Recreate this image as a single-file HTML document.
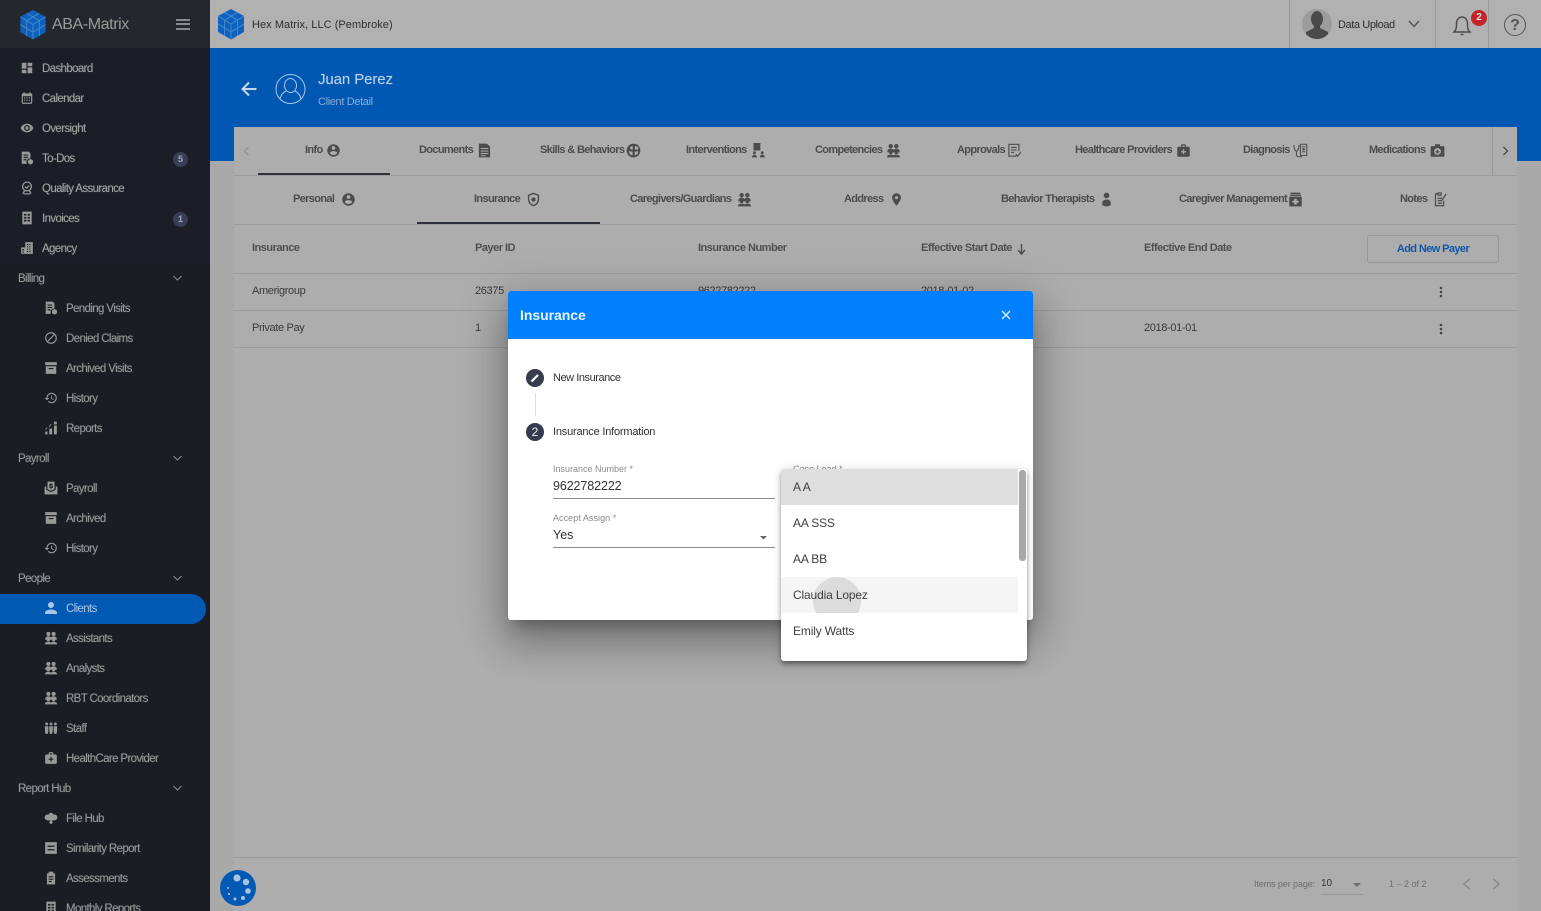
<!DOCTYPE html>
<html lang="en"><head><meta charset="utf-8"><title>Insurance</title>
<style>
html,body{margin:0;padding:0;width:1541px;height:911px;overflow:hidden}
body{position:relative;background:#a9a9a9;font-family:"Liberation Sans",sans-serif}
.a{position:absolute}
.t{position:absolute;white-space:nowrap;line-height:16px;height:16px}
.s{color:#a3a3a3;font-size:11.500px;letter-spacing:-.63px;margin-top:1px;text-shadow:0 0 1px rgba(163,163,163,.45)}
.g{color:#989898;font-size:11.500px;letter-spacing:-.63px;margin-top:1px;text-shadow:0 0 1px rgba(152,152,152,.45)}
.b{color:#4c4c4c;font-size:11px;font-weight:bold;letter-spacing:-.65px}
.h{color:#4f4f4f;font-size:11px;font-weight:bold;letter-spacing:-.5px}
.r{color:#3a3a3a;font-size:11px;letter-spacing:-.35px}
.ln{position:absolute;left:234px;width:1283px;height:1px;background:#9c9c9c}
svg{position:absolute;overflow:visible}
.si{fill:#989898;width:14px;height:14px}
.ti{fill:#4c4c4c;width:15px;height:15px}
.o{position:absolute;left:12px;font-size:12px;letter-spacing:-.15px;color:#3e3e3e;line-height:16px;white-space:nowrap}
</style></head><body>
<svg width="0" height="0" style="position:absolute"><defs>
<symbol id="cube" viewBox="0 0 30 32"><path d="M15 1 28 8v16l-13 7.500L2 24V8z" fill="#0e62bd"/><path d="M15 16v15M15 16 2 8M15 16 28 8M8.500 4.500 21.500 12M21.500 4.500 8.500 12M2 16l6.500 4v8M28 16l-6.500 4v8M8.500 12v8M21.500 12v8M2 16l13 8 13-8" stroke="#5d97d2" stroke-width=".9" fill="none" opacity=".75"/></symbol>
<symbol id="dash" viewBox="0 0 24 24"><path d="M3 13h8V3H3zm0 8h8v-6H3zm10 0h8V11h-8zm0-18v6h8V3z"/></symbol>
<symbol id="cal" viewBox="0 0 24 24"><path d="M9 11H7v2h2zm4 0h-2v2h2zm4 0h-2v2h2zm-8 4H7v2h2zm4 0h-2v2h2zm4 0h-2v2h2zm2-11h-1V2h-2v2H8V2H6v2H5c-1.110 0-2 .9-2 2v14a2 2 0 0 0 2 2h14c1.100 0 2-.9 2-2V6c0-1.100-.9-2-2-2zm0 16H5V9h14z"/></symbol>
<symbol id="eye" viewBox="0 0 24 24"><path d="M12 4.500C7 4.500 2.730 7.610 1 12c1.730 4.390 6 7.500 11 7.500s9.270-3.110 11-7.500c-1.730-4.390-6-7.500-11-7.500zM12 17c-2.760 0-5-2.240-5-5s2.240-5 5-5 5 2.240 5 5-2.240 5-5 5zm0-8c-1.660 0-3 1.340-3 3s1.340 3 3 3 3-1.340 3-3-1.340-3-3-3z"/></symbol>
<symbol id="todo" viewBox="0 0 24 24"><path fill-rule="evenodd" d="M3 1h12l3 3v9a6 6 0 0 0-6 9H3zM6 6v2h8V6zm0 4v2h8v-2zm0 4v2h5v-2z"/><circle cx="18" cy="18.500" r="4.500"/></symbol>
<symbol id="qa" viewBox="0 0 24 24"><path fill="none" stroke="#989898" stroke-width="2.200" d="M12 2a7.500 7.500 0 1 0 .01 0zM8.500 9.500l3 3 4.500-5M8 16l-3 6M16 16l3 6M7 22h10"/></symbol>
<symbol id="inv" viewBox="0 0 24 24"><path fill-rule="evenodd" d="M4 1h16v22H4zM7 5v3h4V5zm6 0v3h4V5zm-6 5v3h4v-3zm6 0v3h4v-3zm-6 5v3h4v-3zm6 0v3h4v-3z"/></symbol>
<symbol id="agency" viewBox="0 0 24 24"><path fill-rule="evenodd" d="M9 2h13v20H2V11h7zM12 5v2h2V5zm4 0v2h2V5zm-4 4v2h2V9zm4 0v2h2V9zm-4 4v2h2v-2zm4 0v2h2v-2zm0 4v2h2v-2zm-4 0v2h2v-2zM4 14v2h3v-2zm0 4v2h3v-2z"/></symbol>
<symbol id="block" viewBox="0 0 24 24"><path d="M12 2C6.480 2 2 6.480 2 12s4.480 10 10 10 10-4.480 10-10S17.520 2 12 2zM4 12c0-4.420 3.580-8 8-8 1.850 0 3.550.63 4.900 1.690L5.690 16.900C4.630 15.550 4 13.850 4 12zm8 8c-1.850 0-3.550-.63-4.900-1.690L18.310 7.100C19.370 8.450 20 10.150 20 12c0 4.420-3.580 8-8 8z"/></symbol>
<symbol id="arch" viewBox="0 0 24 24"><path fill-rule="evenodd" d="M2 2h20v5H2zM3 9h18v13H3zm5 3v2h8v-2z"/></symbol>
<symbol id="hist" viewBox="0 0 24 24"><path d="M13 3a9 9 0 0 0-9 9H1l3.890 3.890.07.14L9 12H6c0-3.870 3.130-7 7-7s7 3.130 7 7-3.130 7-7 7c-1.930 0-3.680-.79-4.940-2.060l-1.420 1.420A8.954 8.954 0 0 0 13 21a9 9 0 0 0 0-18zm-1 5v5l4.280 2.540.72-1.210-3.500-2.080V8z"/></symbol>
<symbol id="rep" viewBox="0 0 24 24"><path d="M2 18h4v5H2zM9 13h5v10H9zM17 8h5v15h-5zM2 14l3-3 1 1-3 3zM8 9l4-4 1 1-4 4zM17 1h5v5h-5z"/></symbol>
<symbol id="pay" viewBox="0 0 24 24"><path fill-rule="evenodd" d="M6 1h12v13l-6 3-6-3zM11 4v1.500H9v4h4v1H9V12h2v1h2v-1h2V8h-4V7h4V5.500h-2V4zM1 10l3-1v6l8 4 8-4V9l3 1v13H1z"/></symbol>
<symbol id="person" viewBox="4 4 16 16"><path d="M12 12c2.210 0 4-1.790 4-4s-1.790-4-4-4-4 1.790-4 4 1.790 4 4 4zm0 2c-2.670 0-8 1.340-8 4v2h16v-2c0-2.660-5.330-4-8-4z"/></symbol>
<symbol id="group" viewBox="0 0 24 24"><circle cx="7.500" cy="5" r="3.500"/><circle cx="16.500" cy="5" r="3.500"/><path d="M2 14c0-3 2.500-5 5.500-5 1.800 0 3.400.7 4.500 2 1.100-1.300 2.700-2 4.500-2 3 0 5.500 2 5.500 5v1H2z"/><circle cx="7.500" cy="15" r="2.800" /><circle cx="16.500" cy="15" r="2.800"/><path d="M1.500 23c0-3 2.500-4.500 6-4.500 2 0 3.500.5 4.500 1.500 1-1 2.500-1.500 4.500-1.500 3.500 0 6 1.500 6 4.500z"/></symbol>
<symbol id="staff" viewBox="0 0 24 24"><circle cx="4.500" cy="5" r="2.500"/><circle cx="12" cy="5" r="2.500"/><circle cx="19.500" cy="5" r="2.500"/><path d="M1.500 9h6v7l-1 6h-4l-1-6zM9 9h6v7l-1 6h-4l-1-6zM16.500 9h6v7l-1 6h-4l-1-6z"/></symbol>
<symbol id="bag" viewBox="0 0 24 24"><path d="M20 6h-4V4c0-1.100-.9-2-2-2h-4c-1.100 0-2 .9-2 2v2H4c-1.100 0-2 .9-2 2v12c0 1.100.9 2 2 2h16c1.100 0 2-.9 2-2V8c0-1.100-.9-2-2-2zM10 4h4v2h-4zm6 11h-3v3h-2v-3H8v-2h3v-3h2v3h3z"/></symbol>
<symbol id="hub" viewBox="0 0 24 24"><path d="M12 3a4.500 4.500 0 0 1 4.300 3.300A5 5 0 1 1 18 16h-4v3h2l-4 4-4-4h2v-3H6a5 5 0 1 1 1.700-9.700A4.500 4.500 0 0 1 12 3z"/></symbol>
<symbol id="sim" viewBox="0 0 24 24"><path fill-rule="evenodd" d="M2 2h20v20H2zM6 8v2h12V8zm0 6v2h12v-2z"/></symbol>
<symbol id="asm" viewBox="0 0 24 24"><path fill-rule="evenodd" d="M8 1h8v3h3v19H5V4h3zM8 9v2h8V9zm0 4v2h8v-2zm0 4v2h5v-2z"/></symbol>
<symbol id="acc" viewBox="0 0 24 24"><path d="M12 2C6.480 2 2 6.480 2 12s4.480 10 10 10 10-4.480 10-10S17.520 2 12 2zm0 3c1.660 0 3 1.340 3 3s-1.340 3-3 3-3-1.340-3-3 1.340-3 3-3zm0 14.200c-2.500 0-4.710-1.280-6-3.220.03-1.990 4-3.080 6-3.080 1.990 0 5.970 1.090 6 3.080-1.290 1.940-3.500 3.220-6 3.220z"/></symbol>
<symbol id="doc" viewBox="0 0 24 24"><path fill-rule="evenodd" d="M3 1h13l5 5v17H3zM6 8v1.500h12V8zm0 4v1.500h12V12zm0 4v1.500h12V16zm0 3.500V21h8v-1.500z"/></symbol>
<symbol id="skill" viewBox="0 0 24 24"><path fill-rule="evenodd" d="M12 1a11 11 0 1 0 .01 0zM10.500 4.500 6 7l2 3.500 3-.5zm4 0-.5 5.500 5 1 1-4zM4.500 13l1.500 5 4.500 2v-6zm9.500 1v6l5-3v-4z"/></symbol>
<symbol id="interv" viewBox="0 0 24 24"><path d="M4 0h11v12H4z"/><circle cx="5.500" cy="15.500" r="2.300"/><path d="M1.500 23c0-3 2-4.500 4-4.500s4 1.500 4 4.500z"/><circle cx="18" cy="15.500" r="2.300"/><path d="M14 23c0-3 2-4.500 4-4.500s4 1.500 4 4.500z"/></symbol>
<symbol id="appr" viewBox="0 0 24 24"><path fill="none" stroke="#4c4c4c" stroke-width="1.800" d="M15 21H3V2h16v11M6.500 7h9M6.500 11h9M6.500 15h5M14 18l3 3 5-6"/></symbol>
<symbol id="steth" viewBox="0 0 24 24"><path fill="none" stroke="#4c4c4c" stroke-width="1.700" d="M1.500 3c0 7 2 10 4 10s4-3 4-10M5.500 13v5c0 3 2 4 4 4h5M12 2h10v18H12zM14.500 6h5M14.500 14h5"/><circle cx="17" cy="10" r="2" fill="#4c4c4c"/></symbol>
<symbol id="cam" viewBox="0 0 24 24"><path fill-rule="evenodd" d="M8 2h8v3h5a2 2 0 0 1 2 2v13a2 2 0 0 1-2 2H3a2 2 0 0 1-2-2V7a2 2 0 0 1 2-2h5zM12 8a5.500 5.500 0 1 0 .01 0z"/><path d="M11 11h2v2h2v2h-2v2h-2v-2H9v-2h2z"/></symbol>
<symbol id="shield" viewBox="0 0 24 24"><path fill-rule="evenodd" d="M12 1l9 3.500v7c0 5.500-3.800 9.700-9 11.500-5.200-1.800-9-6-9-11.500v-7zm0 2.500L5.300 6v5.500c0 4.200 2.900 7.500 6.700 9 3.800-1.500 6.700-4.800 6.700-9V6z"/><circle cx="12" cy="12" r="3.500"/></symbol>
<symbol id="pin" viewBox="0 0 24 24"><path d="M12 2C8.130 2 5 5.130 5 9c0 5.250 7 13 7 13s7-7.750 7-13c0-3.870-3.130-7-7-7zm0 9.500a2.500 2.500 0 0 1 0-5 2.500 2.500 0 0 1 0 5z"/></symbol>
<symbol id="ther" viewBox="0 0 24 24"><circle cx="12" cy="5.500" r="4.500"/><path d="M5 18c0-4 3-6 7-6s7 2 7 6z"/><ellipse cx="12" cy="19.500" rx="7" ry="3.500"/></symbol>
<symbol id="cg" viewBox="0 0 24 24"><path fill-rule="evenodd" d="M4 1h16v3H4zM3 5h18v2H3zM2 8h20v15H2zm8 3v3H7v3h3v3h4v-3h3v-3h-3v-3z"/></symbol>
<symbol id="note" viewBox="0 0 24 24"><path fill="none" stroke="#4c4c4c" stroke-width="1.900" d="M8 3H4v19h13v-8M8 1.500h5V5H8zM7.500 10h7M7.500 14h6M7.500 18h7M13 15 21 3"/></symbol>
</defs></svg>

<!-- SIDEBAR -->
<div class="a" style="left:0;top:0;width:210px;height:911px;background:#1b1e26"></div>
<div class="a" style="left:0;top:0;width:210px;height:48px;background:#24272e"></div>
<div class="a" style="left:0;top:264px;width:210px;height:647px;background:#1a1d24"></div>
<svg style="left:18px;top:9px" width="30" height="31"><use href="#cube"/></svg>
<div class="t" style="left:52px;top:17px;color:#9a9a9a;font-size:16px;letter-spacing:-.4px">ABA-Matrix</div>
<div class="a" style="left:176px;top:19px;width:14px;height:2px;background:#8a8a8a;box-shadow:0 4px 0 #8a8a8a,0 9px 0 #8a8a8a"></div>

<svg class="si" style="left:20px;top:61px"><use href="#dash"/></svg><div class="t s" style="left:42px;top:60px">Dashboard</div>
<svg class="si" style="left:20px;top:91px"><use href="#cal"/></svg><div class="t s" style="left:42px;top:90px">Calendar</div>
<svg class="si" style="left:20px;top:121px"><use href="#eye"/></svg><div class="t s" style="left:42px;top:120px">Oversight</div>
<svg class="si" style="left:20px;top:151px"><use href="#todo"/></svg><div class="t s" style="left:42px;top:150px">To-Dos</div>
<svg class="si" style="left:20px;top:181px"><use href="#qa"/></svg><div class="t s" style="left:42px;top:180px">Quality Assurance</div>
<svg class="si" style="left:20px;top:211px"><use href="#inv"/></svg><div class="t s" style="left:42px;top:210px">Invoices</div>
<svg class="si" style="left:20px;top:241px"><use href="#agency"/></svg><div class="t s" style="left:42px;top:240px">Agency</div>
<div class="a" style="left:173px;top:152px;width:15px;height:15px;border-radius:50%;background:#383d58;color:#a5a5b5;font-size:9px;font-weight:bold;line-height:14px;text-align:center">5</div>
<div class="a" style="left:173px;top:212px;width:15px;height:15px;border-radius:50%;background:#383d58;color:#a5a5b5;font-size:9px;font-weight:bold;line-height:14px;text-align:center">1</div>

<div class="t g" style="left:18px;top:270px">Billing</div>
<svg style="left:173px;top:275px" width="9" height="6"><path d="M.5 1 4.500 5 8.500 1" fill="none" stroke="#8a8a8a" stroke-width="1.100"/></svg>
<svg class="si" style="left:44px;top:301px"><use href="#todo"/></svg><div class="t g" style="left:66px;top:300px">Pending Visits</div>
<svg class="si" style="left:44px;top:331px"><use href="#block"/></svg><div class="t g" style="left:66px;top:330px">Denied Claims</div>
<svg class="si" style="left:44px;top:361px"><use href="#arch"/></svg><div class="t g" style="left:66px;top:360px">Archived Visits</div>
<svg class="si" style="left:44px;top:391px"><use href="#hist"/></svg><div class="t g" style="left:66px;top:390px">History</div>
<svg class="si" style="left:44px;top:421px"><use href="#rep"/></svg><div class="t g" style="left:66px;top:420px">Reports</div>

<div class="t g" style="left:18px;top:450px">Payroll</div>
<svg style="left:173px;top:455px" width="9" height="6"><path d="M.5 1 4.500 5 8.500 1" fill="none" stroke="#8a8a8a" stroke-width="1.100"/></svg>
<svg class="si" style="left:44px;top:481px"><use href="#pay"/></svg><div class="t g" style="left:66px;top:480px">Payroll</div>
<svg class="si" style="left:44px;top:511px"><use href="#arch"/></svg><div class="t g" style="left:66px;top:510px">Archived</div>
<svg class="si" style="left:44px;top:541px"><use href="#hist"/></svg><div class="t g" style="left:66px;top:540px">History</div>

<div class="t g" style="left:18px;top:570px">People</div>
<svg style="left:173px;top:575px" width="9" height="6"><path d="M.5 1 4.500 5 8.500 1" fill="none" stroke="#8a8a8a" stroke-width="1.100"/></svg>
<div class="a" style="left:0;top:594px;width:206px;height:30px;background:#0059b3;border-radius:0 15px 15px 0"></div>
<svg style="left:45px;top:602px;width:12px;height:12px;fill:#a8c6e6"><use href="#person"/></svg><div class="t" style="left:66px;top:601px;color:#a8c6e6;font-size:11.500px;letter-spacing:-.63px">Clients</div>
<svg class="si" style="left:44px;top:631px"><use href="#group"/></svg><div class="t g" style="left:66px;top:630px">Assistants</div>
<svg class="si" style="left:44px;top:661px"><use href="#group"/></svg><div class="t g" style="left:66px;top:660px">Analysts</div>
<svg class="si" style="left:44px;top:691px"><use href="#group"/></svg><div class="t g" style="left:66px;top:690px">RBT Coordinators</div>
<svg class="si" style="left:44px;top:721px"><use href="#staff"/></svg><div class="t g" style="left:66px;top:720px">Staff</div>
<svg class="si" style="left:44px;top:751px"><use href="#bag"/></svg><div class="t g" style="left:66px;top:750px">HealthCare Provider</div>

<div class="t g" style="left:18px;top:780px">Report Hub</div>
<svg style="left:173px;top:785px" width="9" height="6"><path d="M.5 1 4.500 5 8.500 1" fill="none" stroke="#8a8a8a" stroke-width="1.100"/></svg>
<svg class="si" style="left:44px;top:811px"><use href="#hub"/></svg><div class="t g" style="left:66px;top:810px">File Hub</div>
<svg class="si" style="left:44px;top:841px"><use href="#sim"/></svg><div class="t g" style="left:66px;top:840px">Similarity Report</div>
<svg class="si" style="left:44px;top:871px"><use href="#asm"/></svg><div class="t g" style="left:66px;top:870px">Assessments</div>
<svg class="si" style="left:44px;top:901px"><use href="#inv"/></svg><div class="t g" style="left:66px;top:900px">Monthly Reports</div>

<!-- TOP BAR -->
<div class="a" style="left:210px;top:0;width:1331px;height:48px;background:#b1b1b1"></div>
<svg style="left:216px;top:8px" width="30" height="32"><use href="#cube"/></svg>
<div class="t" style="left:252px;top:17px;color:#2f2f2f;font-size:11px;letter-spacing:.05px">Hex Matrix, LLC (Pembroke)</div>
<div class="a" style="left:1289px;top:0;width:1px;height:48px;background:#989898"></div>
<div class="a" style="left:1435px;top:0;width:1px;height:48px;background:#989898"></div>
<div class="a" style="left:1488px;top:0;width:1px;height:48px;background:#989898"></div>
<div class="a" style="left:1302px;top:9px;width:30px;height:30px;border-radius:50%;background:#9c9c9c;overflow:hidden">
<svg style="left:2px;top:1px" width="26" height="30"><ellipse cx="13" cy="9" rx="6" ry="8" fill="#4a4a4a"/><path d="M10 15h6v3l8 4v8H2v-8l8-4z" fill="#4a4a4a"/></svg></div>
<div class="t" style="left:1338px;top:17px;color:#2f2f2f;font-size:11px;letter-spacing:-.4px">Data Upload</div>
<svg style="left:1408px;top:20px" width="12" height="8"><path d="M1 1 6 6.500 11 1" fill="none" stroke="#555" stroke-width="1.500"/></svg>
<svg style="left:1452px;top:14px" width="20" height="23"><path d="M2 18c2-2 2.500-3.500 2.500-8C4.500 5.500 7 3 10 3s5.500 2.500 5.500 7c0 4.500.5 6 2.500 8zM8.500 20.500h3" fill="none" stroke="#4d4d4d" stroke-width="1.500"/></svg>
<div class="a" style="left:1471px;top:10px;width:16px;height:16px;border-radius:50%;background:#c2262c;color:#ddd;font-size:10px;font-weight:bold;line-height:15px;text-align:center">2</div>
<div class="a" style="left:1504px;top:14px;width:20px;height:20px;border:1.500px solid #555;border-radius:50%;color:#555;font-size:16px;font-weight:bold;line-height:21px;text-align:center">?</div>

<!-- BLUE BAND -->
<div class="a" style="left:210px;top:48px;width:1331px;height:113px;background:#0058b2"></div>
<svg style="left:241px;top:81px" width="16" height="16"><path d="M15.500 8H2M8 1.500 1.500 8 8 14.500" fill="none" stroke="#c5d6ea" stroke-width="2"/></svg>
<svg style="left:275px;top:73px" width="31" height="32"><g fill="none" stroke="#a9c6e8" stroke-width="1"><circle cx="15.500" cy="16" r="14.500"/><ellipse cx="15.500" cy="12.500" rx="6" ry="7"/><path d="M5 26c1-5 4-7 6-8M26 26c-1-5-4-7-6-8"/></g></svg>
<div class="t" style="left:318px;top:72px;color:#b9cfe8;font-size:15px;letter-spacing:-.1px;text-shadow:0 0 1px rgba(185,207,232,.5)">Juan Perez</div>
<div class="t" style="left:318px;top:94px;color:#87aed9;font-size:11px;letter-spacing:-.35px">Client Detail</div>

<!-- CARD -->
<div class="a" style="left:234px;top:127px;width:1283px;height:784px;background:#adadad"></div>
<div class="ln" style="top:175px"></div>
<div class="ln" style="top:224px"></div>
<div class="ln" style="top:273px"></div>
<div class="ln" style="top:310px"></div>
<div class="ln" style="top:347px"></div>
<div class="ln" style="top:857px"></div>
<div class="a" style="left:1492px;top:127px;width:1px;height:48px;background:#9a9a9a"></div>
<svg style="left:243px;top:146px" width="7" height="10"><path d="M5.500 1 1.500 5 5.500 9" fill="none" stroke="#8a8a8a" stroke-width="1"/></svg>
<svg style="left:1502px;top:146px" width="7" height="10"><path d="M1.500 1 5.500 5 1.500 9" fill="none" stroke="#3c3c3c" stroke-width="1.200"/></svg>
<div class="a" style="left:258px;top:173px;width:132px;height:2px;background:#2e3138"></div>
<div class="a" style="left:417px;top:222px;width:183px;height:2px;background:#2e3138"></div>

<div class="t b" style="left:305px;top:142px">Info</div><svg class="ti" style="left:326px;top:143px"><use href="#acc"/></svg>
<div class="t b" style="left:419px;top:142px">Documents</div><svg class="ti" style="left:477px;top:143px"><use href="#doc"/></svg>
<div class="t b" style="left:540px;top:142px">Skills &amp; Behaviors</div><svg class="ti" style="left:626px;top:143px"><use href="#skill"/></svg>
<div class="t b" style="left:686px;top:142px">Interventions</div><svg class="ti" style="left:751px;top:143px"><use href="#interv"/></svg>
<div class="t b" style="left:815px;top:142px">Competencies</div><svg class="ti" style="left:886px;top:143px"><use href="#group"/></svg>
<div class="t b" style="left:957px;top:142px">Approvals</div><svg class="ti" style="left:1007px;top:143px"><use href="#appr"/></svg>
<div class="t b" style="left:1075px;top:142px">Healthcare Providers</div><svg class="ti" style="left:1176px;top:143px"><use href="#bag"/></svg>
<div class="t b" style="left:1243px;top:142px">Diagnosis</div><svg class="ti" style="left:1293px;top:143px"><use href="#steth"/></svg>
<div class="t b" style="left:1369px;top:142px">Medications</div><svg class="ti" style="left:1430px;top:143px"><use href="#cam"/></svg>

<div class="t b" style="left:293px;top:191px">Personal</div><svg class="ti" style="left:341px;top:192px"><use href="#acc"/></svg>
<div class="t b" style="left:474px;top:191px">Insurance</div><svg class="ti" style="left:526px;top:192px"><use href="#shield"/></svg>
<div class="t b" style="left:630px;top:191px">Caregivers/Guardians</div><svg class="ti" style="left:737px;top:192px"><use href="#group"/></svg>
<div class="t b" style="left:844px;top:191px">Address</div><svg class="ti" style="left:889px;top:192px"><use href="#pin"/></svg>
<div class="t b" style="left:1001px;top:191px">Behavior Therapists</div><svg class="ti" style="left:1099px;top:192px"><use href="#ther"/></svg>
<div class="t b" style="left:1179px;top:191px">Caregiver Management</div><svg class="ti" style="left:1288px;top:192px"><use href="#cg"/></svg>
<div class="t b" style="left:1400px;top:191px">Notes</div><svg class="ti" style="left:1433px;top:192px"><use href="#note"/></svg>

<div class="t h" style="left:252px;top:240px">Insurance</div>
<div class="t h" style="left:475px;top:240px">Payer ID</div>
<div class="t h" style="left:698px;top:240px">Insurance Number</div>
<div class="t h" style="left:921px;top:240px">Effective Start Date</div>
<svg style="left:1017px;top:244px" width="9" height="11"><path d="M4.500 0v9M1 6l3.500 4L8 6" fill="none" stroke="#4c4c4c" stroke-width="1.400"/></svg>
<div class="t h" style="left:1144px;top:240px">Effective End Date</div>
<div class="a" style="left:1367px;top:235px;width:130px;height:26px;border:1px solid #979797;border-radius:3px;color:#0f58a8;font-size:11px;font-weight:bold;letter-spacing:-.6px;line-height:27px;text-align:center">Add New Payer</div>

<div class="t r" style="left:252px;top:283px">Amerigroup</div>
<div class="t r" style="left:475px;top:283px">26375</div>
<div class="t r" style="left:698px;top:283px">9622782222</div>
<div class="t r" style="left:921px;top:283px">2018-01-02</div>
<div class="t r" style="left:252px;top:320px">Private Pay</div>
<div class="t r" style="left:475px;top:320px">1</div>
<div class="t r" style="left:1144px;top:320px">2018-01-01</div>
<svg style="left:1439px;top:286px" width="4" height="12" fill="#444"><circle cx="2" cy="2" r="1.300"/><circle cx="2" cy="6" r="1.300"/><circle cx="2" cy="10" r="1.300"/></svg>
<svg style="left:1439px;top:323px" width="4" height="12" fill="#444"><circle cx="2" cy="2" r="1.300"/><circle cx="2" cy="6" r="1.300"/><circle cx="2" cy="10" r="1.300"/></svg>

<div class="t" style="left:1254px;top:876px;color:#6e6e6e;font-size:9px;letter-spacing:-.1px">Items per page:</div>
<div class="t" style="left:1321px;top:876px;color:#333;font-size:10px">10</div>
<div class="a" style="left:1321px;top:894px;width:42px;height:1px;background:#999"></div>
<svg style="left:1353px;top:883px" width="8" height="4"><path d="M0 0h8L4 4z" fill="#6e6e6e"/></svg>
<div class="t" style="left:1389px;top:876px;color:#6e6e6e;font-size:9px">1 – 2 of 2</div>
<svg style="left:1462px;top:878px" width="9" height="12"><path d="M7.500 1 2 6l5.500 5" fill="none" stroke="#8c8c8c" stroke-width="1.600"/></svg>
<svg style="left:1492px;top:878px" width="9" height="12"><path d="M1.500 1 7 6l-5.500 5" fill="none" stroke="#8c8c8c" stroke-width="1.600"/></svg>

<!-- FAB -->
<svg style="left:220px;top:870px" width="36" height="36"><circle cx="18" cy="18" r="18" fill="#0059b3"/><g fill="#a8c4e2"><circle cx="17" cy="8" r="3.600"/><circle cx="26" cy="12" r="3.200"/><circle cx="28" cy="21" r="2.800"/><circle cx="23" cy="28" r="2"/><circle cx="15" cy="29" r="1.500"/><circle cx="9" cy="24" r="1.100"/><circle cx="8" cy="18" r="1"/></g></svg>

<!-- DIALOG -->
<div class="a" style="left:508px;top:291px;width:525px;height:329px;background:#fff;border-radius:3px;box-shadow:0 11px 15px -7px rgba(0,0,0,.3),0 24px 38px 3px rgba(0,0,0,.2),0 9px 46px 8px rgba(0,0,0,.16)"></div>
<div class="a" style="left:508px;top:291px;width:525px;height:48px;background:#0080ff;border-radius:3px 3px 0 0"></div>
<div class="t" style="left:520px;top:307px;color:#e9f3ff;font-size:14px;font-weight:bold;letter-spacing:-.05px;line-height:17px;height:17px">Insurance</div>
<svg style="left:1001px;top:310px" width="10" height="10"><path d="M1 1 9 9M9 1 1 9" stroke="#e3f0ff" stroke-width="1.300"/></svg>

<div class="a" style="left:526px;top:369px;width:18px;height:18px;border-radius:50%;background:#363b4d"></div>
<svg style="left:530px;top:373px" width="10" height="10"><path d="M1.500 8.500 8 2" stroke="#fff" stroke-width="2.200" fill="none"/></svg>
<div class="t" style="left:553px;top:370px;color:#333;font-size:11px;letter-spacing:-.45px">New Insurance</div>
<div class="a" style="left:535px;top:393px;width:1px;height:23px;background:#ddd"></div>
<div class="a" style="left:526px;top:423px;width:18px;height:18px;border-radius:50%;background:#363b4d;color:#eee;font-size:12px;line-height:18px;text-align:center">2</div>
<div class="t" style="left:553px;top:424px;color:#2f2f2f;font-size:11px;letter-spacing:-.2px">Insurance Information</div>

<div class="t" style="left:553px;top:461px;color:#8b8b8b;font-size:9px">Insurance Number *</div>
<div class="t" style="left:553px;top:478px;color:#333;font-size:12.500px;letter-spacing:-.1px">9622782222</div>
<div class="a" style="left:553px;top:498px;width:222px;height:1px;background:#8c8c8c"></div>
<div class="t" style="left:553px;top:510px;color:#8b8b8b;font-size:9px;letter-spacing:.05px">Accept Assign *</div>
<div class="t" style="left:553px;top:527px;color:#333;font-size:12.500px">Yes</div>
<div class="a" style="left:553px;top:547px;width:222px;height:1px;background:#8c8c8c"></div>
<svg style="left:760px;top:536px" width="7" height="4"><path d="M0 0h7L3.500 3.500z" fill="#666"/></svg>
<div class="t" style="left:793px;top:461px;color:#8b8b8b;font-size:9px">Case Load *</div>

<!-- DROPDOWN -->
<div class="a" style="left:781px;top:469px;width:246px;height:192px;background:#fff;border-radius:3px;overflow:hidden;box-shadow:0 2px 4px -1px rgba(0,0,0,.3),0 4px 5px rgba(0,0,0,.2),0 1px 10px rgba(0,0,0,.15)">
<div class="a" style="left:0;top:0;width:237px;height:36px;background:#dedede"></div>
<div class="a" style="left:0;top:108px;width:237px;height:36px;background:#f5f5f5;overflow:hidden"><div class="a" style="left:32px;top:0;width:48px;height:48px;border-radius:50%;background:#dcdcdc"></div></div>
<div class="o" style="top:10px">A A</div>
<div class="o" style="top:46px">AA SSS</div>
<div class="o" style="top:82px">AA BB</div>
<div class="o" style="top:118px">Claudia Lopez</div>
<div class="o" style="top:154px">Emily Watts</div>
<div class="a" style="left:238px;top:1px;width:7px;height:91px;background:#a8a8a8;border-radius:3px"></div>
</div>
</body></html>
